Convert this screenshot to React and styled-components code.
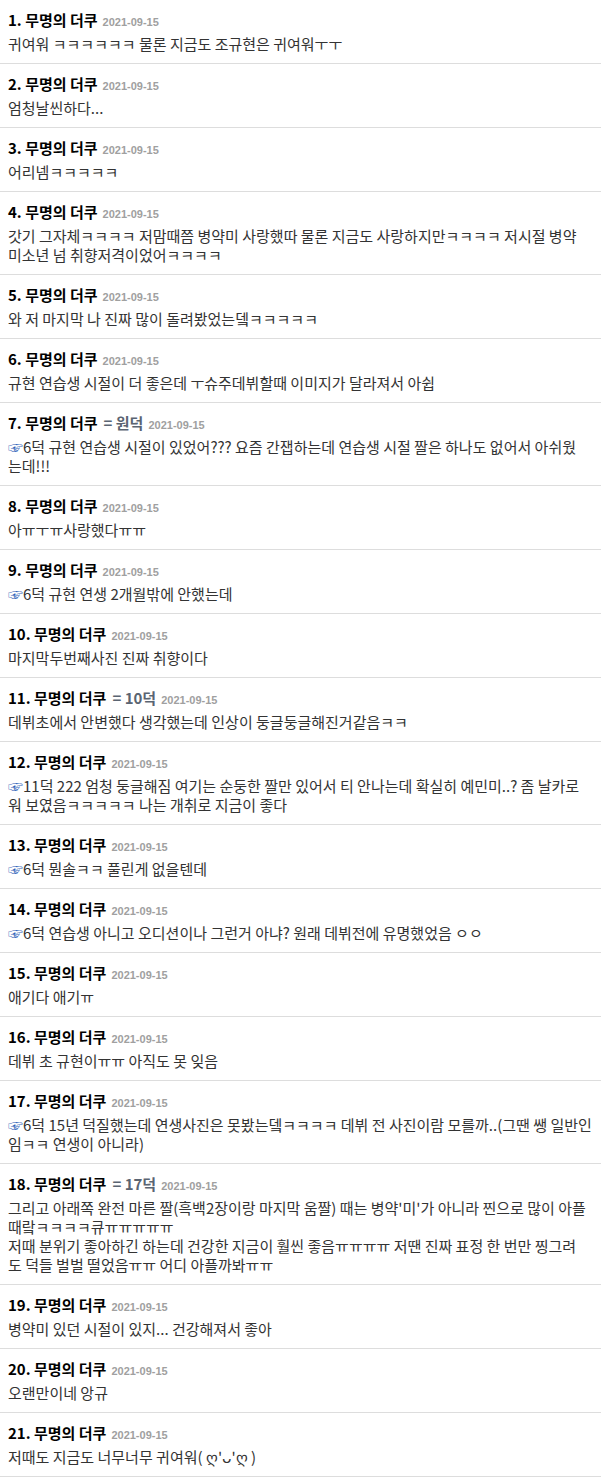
import React from "react";
import styled, { createGlobalStyle } from "styled-components";

const Global = createGlobalStyle`
  html, body { margin: 0; padding: 0; background: #fff; }
  body { font-family: "Noto Sans CJK KR", "Noto Sans", sans-serif; }
`;

const List = styled.ul`
  list-style: none;
  margin: 0;
  padding: 0;
`;

const Item = styled.li`
  padding: 10px 8px 10px;
  border-bottom: 1px solid #dddddd;
`;

const Head = styled.div`
  display: flex;
  align-items: baseline;
  height: 20px;
  line-height: 20px;
  margin-bottom: 4px;
  white-space: nowrap;
`;

const Name = styled.span`
  font-size: 15px;
  font-weight: 700;
  color: #000;
`;

const Reply = styled.span`
  font-size: 15px;
  font-weight: 700;
  color: #5a6472;
  margin-left: 6px;
`;

const DateText = styled.span`
  font-family: "Liberation Sans", "Noto Sans", sans-serif;
  font-size: 11px;
  font-weight: 700;
  color: #a0a0a0;
  margin-left: 5px;
`;

const Body = styled.div`
  font-size: 15px;
  line-height: 19px;
  color: #333;
`;

const Line = styled.div`
  white-space: nowrap;
`;

const Hand = styled.span`
  color: #2f62b8;
`;

const items = [
  { l: ["귀여워 ㅋㅋㅋㅋㅋㅋ 물론 지금도 조규현은 귀여워ㅜㅜ"] },
  { l: ["엄청날씬하다..."] },
  { l: ["어리넴ㅋㅋㅋㅋㅋ"] },
  {
    l: [
      "갓기 그자체ㅋㅋㅋㅋ 저맘때쯤 병약미 사랑했따 물론 지금도 사랑하지만ㅋㅋㅋㅋ 저시절 병약",
      "미소년 넘 취향저격이었어ㅋㅋㅋㅋ",
    ],
  },
  { l: ["와 저 마지막 나 진짜 많이 돌려봤었는뎈ㅋㅋㅋㅋㅋ"] },
  { l: ["규현 연습생 시절이 더 좋은데 ㅜ슈주데뷔할때 이미지가 달라져서 아쉽"] },
  {
    r: "원덕",
    h: true,
    l: [
      "6덕 규현 연습생 시절이 있었어??? 요즘 간잽하는데 연습생 시절 짤은 하나도 없어서 아쉬웠",
      "는데!!!",
    ],
  },
  { l: ["아ㅠㅜㅠ사랑했다ㅠㅠ"] },
  { h: true, l: ["6덕 규현 연생 2개월밖에 안했는데"] },
  { l: ["마지막두번째사진 진짜 취향이다"] },
  { r: "10덕", l: ["데뷔초에서 안변했다 생각했는데 인상이 둥글둥글해진거같음ㅋㅋ"] },
  {
    h: true,
    l: [
      "11덕 222 엄청 둥글해짐 여기는 순둥한 짤만 있어서 티 안나는데 확실히 예민미..? 좀 날카로",
      "워 보였음ㅋㅋㅋㅋㅋ 나는 개취로 지금이 좋다",
    ],
  },
  { h: true, l: ["6덕 뭔솔ㅋㅋ 풀린게 없을텐데"] },
  { h: true, l: ["6덕 연습생 아니고 오디션이나 그런거 아냐? 원래 데뷔전에 유명했었음 ㅇㅇ"] },
  { l: ["애기다 애기ㅠ"] },
  { l: ["데뷔 초 규현이ㅠㅠ 아직도 못 잊음"] },
  {
    h: true,
    l: [
      "6덕 15년 덕질했는데 연생사진은 못봤는뎈ㅋㅋㅋㅋ 데뷔 전 사진이람 모를까..(그땐 쌩 일반인",
      "임ㅋㅋ 연생이 아니라)",
    ],
  },
  {
    r: "17덕",
    l: [
      "그리고 아래쪽 완전 마른 짤(흑백2장이랑 마지막 움짤) 때는 병약'미'가 아니라 찐으로 많이 아플",
      "때랔ㅋㅋㅋㅋ큐ㅠㅠㅠㅠㅠ",
      "저때 분위기 좋아하긴 하는데 건강한 지금이 훨씬 좋음ㅠㅠㅠㅠ 저땐 진짜 표정 한 번만 찡그려",
      "도 덕들 벌벌 떨었음ㅠㅠ 어디 아플까봐ㅠㅠ",
    ],
  },
  { l: ["병약미 있던 시절이 있지... 건강해져서 좋아"] },
  { l: ["오랜만이네 앙규"] },
  { l: ["저때도 지금도 너무너무 귀여워( ღ'ᴗ'ღ )"] },
];

export default function App() {
  return (
    <>
      <Global />
      <List>
        {items.map((it, i) => (
          <Item key={i}>
            <Head>
              <Name>{i + 1}. 무명의 더쿠</Name>
              {it.r && <Reply>= {it.r}</Reply>}
              <DateText>2021-09-15</DateText>
            </Head>
            <Body>
              {it.l.map((line, j) => (
                <Line key={j}>
                  {j === 0 && it.h && <Hand>☞</Hand>}
                  {line}
                </Line>
              ))}
            </Body>
          </Item>
        ))}
      </List>
    </>
  );
}
